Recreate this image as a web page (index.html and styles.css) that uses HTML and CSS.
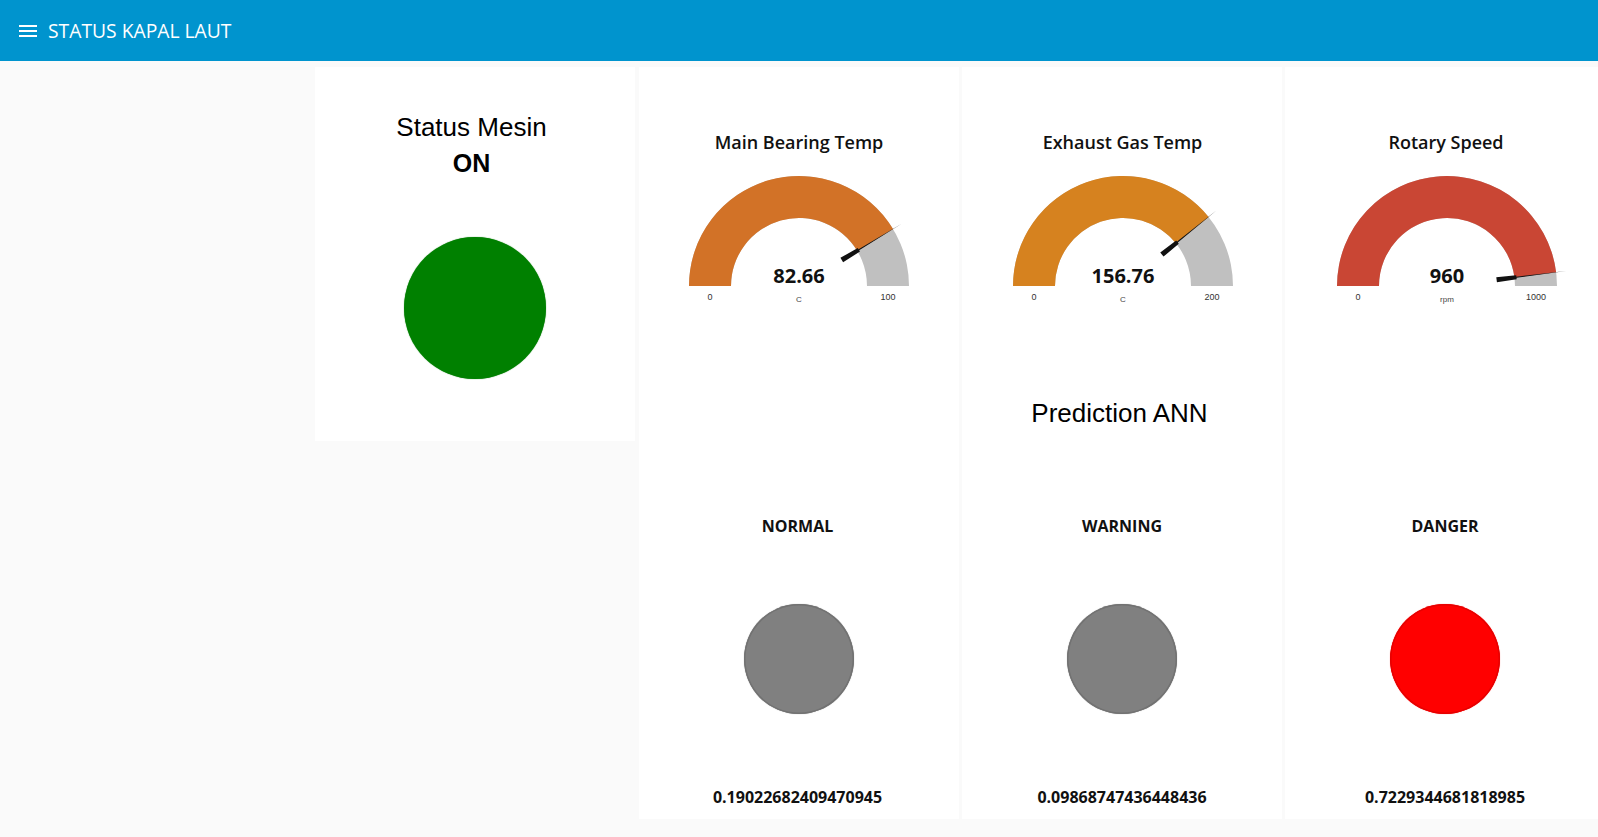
FILE: index.html
```html
<!DOCTYPE html>
<html>
<head>
<meta charset="utf-8">
<title>STATUS KAPAL LAUT</title>
<link rel="stylesheet" href="styles.css">
</head>
<body>
<header class="toolbar">
  <div class="menu"><span></span><span></span><span></span></div>
  <div class="app-title">STATUS KAPAL LAUT</div>
</header>
<main class="content">
  <section class="card card-status">
    <div class="status-text">
      <div class="status-name">Status Mesin</div>
      <div class="status-on">ON</div>
    </div>
    <div class="led led-big led-green"></div>
  </section>

  <section class="card card-col card-first">
    <div class="gauge-widget">
      <div class="gauge-title">Main Bearing Temp</div>
      <svg class="gauge" width="320" height="160" viewBox="0 0 320 160">
        <path class="arc-bg" d="M 50 131 A 110 110 0 0 1 270 131 L 228 131 A 68 68 0 0 0 92 131 Z"/>
        <path fill="#d27227" d="M 50 131 A 110 110 0 0 1 254.08 74.0 L 218.16 95.76 A 68 68 0 0 0 92 131 Z"/>
        <g transform="translate(160 131) rotate(-31.21)">
          <polygon class="needle" points="50,-2.6 70,-2.1 70,-0.6 120,0 70,0.6 70,2.1 50,2.6"/>
        </g>
        <text class="g-value" x="160" y="128">82.66</text>
        <text class="g-lim" x="71" y="145">0</text>
        <text class="g-lim" x="249" y="145">100</text>
        <text class="g-unit" x="160" y="147">C</text>
      </svg>
    </div>
    <div class="pred-row"></div>
    <div class="label-row">NORMAL</div>
    <div class="led-row"><div class="led led-small led-grey"></div></div>
    <div class="value-row">0.19022682409470945</div>
  </section>

  <section class="card card-col card-mid">
    <div class="gauge-widget">
      <div class="gauge-title">Exhaust Gas Temp</div>
      <svg class="gauge" width="320" height="160" viewBox="0 0 320 160">
        <path class="arc-bg" d="M 50 131 A 110 110 0 0 1 270 131 L 228 131 A 68 68 0 0 0 92 131 Z"/>
        <path fill="#d6821f" d="M 50 131 A 110 110 0 0 1 245.60 61.91 L 212.92 88.29 A 68 68 0 0 0 92 131 Z"/>
        <g transform="translate(160 131) rotate(-38.92)">
          <polygon class="needle" points="50,-2.6 70,-2.1 70,-0.6 120,0 70,0.6 70,2.1 50,2.6"/>
        </g>
        <text class="g-value" x="160" y="128">156.76</text>
        <text class="g-lim" x="71" y="145">0</text>
        <text class="g-lim" x="249" y="145">200</text>
        <text class="g-unit" x="160" y="147">C</text>
      </svg>
    </div>
    <div class="pred-row"><span class="pred-title">Prediction ANN</span></div>
    <div class="label-row">WARNING</div>
    <div class="led-row"><div class="led led-small led-grey"></div></div>
    <div class="value-row">0.09868747436448436</div>
  </section>

  <section class="card card-col card-last">
    <div class="gauge-widget">
      <div class="gauge-title">Rotary Speed</div>
      <svg class="gauge" width="320" height="160" viewBox="0 0 320 160">
        <path class="arc-bg" d="M 50 131 A 110 110 0 0 1 270 131 L 228 131 A 68 68 0 0 0 92 131 Z"/>
        <path fill="#c94634" d="M 50 131 A 110 110 0 0 1 269.13 117.21 L 227.46 122.48 A 68 68 0 0 0 92 131 Z"/>
        <g transform="translate(160 131) rotate(-7.2)">
          <polygon class="needle" points="50,-2.6 70,-2.1 70,-0.6 120,0 70,0.6 70,2.1 50,2.6"/>
        </g>
        <text class="g-value" x="160" y="128">960</text>
        <text class="g-lim" x="71" y="145">0</text>
        <text class="g-lim" x="249" y="145">1000</text>
        <text class="g-unit" x="160" y="147">rpm</text>
      </svg>
    </div>
    <div class="pred-row"></div>
    <div class="label-row">DANGER</div>
    <div class="led-row"><div class="led led-small led-red"></div></div>
    <div class="value-row">0.7229344681818985</div>
  </section>
</main>
</body>
</html>
```

FILE: styles.css
```css
* { box-sizing: border-box; }
html, body { margin: 0; padding: 0; }
body {
  background: #fafafa;
  font-family: "Open Sans", "Noto Sans", sans-serif;
  color: #111;
  width: 1598px;
  height: 837px;
  overflow: hidden;
}
.toolbar {
  height: 61px;
  background: #0094ce;
  color: #fff;
  display: flex;
  align-items: center;
  padding-left: 19px;
}
.menu {
  width: 18px;
  height: 12px;
  display: flex;
  flex-direction: column;
  justify-content: space-between;
  margin-right: 11px;
}
.menu span { display: block; height: 2px; background: #fff; }
.app-title { font-size: 19.3px; }

.content {
  display: flex;
  align-items: flex-start;
  gap: 3px;
  padding: 6px 0 0 315px;
  width: 1598px;
  overflow: hidden;
}
.card { background: #fff; width: 320px; flex: none; }
.card-status { height: 374px; margin-right: 1px; }
.card-col { height: 752px; }

.status-text {
  padding-top: 42px;
  padding-right: 7px;
  text-align: center;
  font-family: "Liberation Sans", Arial, sans-serif;
  font-size: 26px;
  line-height: 36px;
  color: #000;
}
.status-on { font-weight: bold; font-size: 25px; }

.led { border-radius: 50%; }
.led-big { width: 142px; height: 142px; margin: 56px auto 0; }
.led-green { background: #008000; box-shadow: 0 0 1px 0 #2a8a2a; }
.led-small { width: 110px; height: 110px; }
.led-grey { background: #808080; box-shadow: inset 0 0 0 1.5px #727272, 0 0 1px #999; }
.led-red { background: #ff0000; box-shadow: inset 0 0 0 1.5px #e60000, 0 0 1px #f66; }

.gauge-widget { height: 248px; padding-top: 63px; }
.gauge-title {
  text-align: center;
  font-size: 18px;
  font-weight: 600;
  line-height: 24px;
}
.gauge { display: block; margin-top: 1px; }
.card-mid .gauge-widget { padding-left: 1px; }
.card-last .gauge-widget { padding-left: 2px; }
.arc-bg { fill: #c0c0c0; }
.needle { fill: #111; }
.g-value {
  font-family: "Open Sans", sans-serif;
  font-weight: 700;
  font-size: 20px;
  text-anchor: middle;
  fill: #111;
}
.g-lim {
  font-family: "Liberation Sans", Arial, sans-serif;
  font-size: 9px;
  text-anchor: middle;
  fill: #333;
}
.g-unit {
  font-family: "Liberation Sans", Arial, sans-serif;
  font-size: 8px;
  text-anchor: middle;
  fill: #444;
}

.pred-row {
  height: 196px;
  display: flex;
  align-items: center;
  justify-content: center;
}
.pred-title {
  font-family: "Liberation Sans", Arial, sans-serif;
  font-size: 26px;
  color: #000;
  padding-right: 5px;
}
.label-row, .value-row {
  display: flex;
  align-items: center;
  justify-content: center;
  font-size: 16px;
  font-weight: 700;
}
.card-first .label-row, .card-first .value-row { padding-right: 3px; }
.label-row { height: 30px; }
.led-row {
  height: 236px;
  display: flex;
  align-items: center;
  justify-content: center;
}
.value-row { height: 40px; }
```
